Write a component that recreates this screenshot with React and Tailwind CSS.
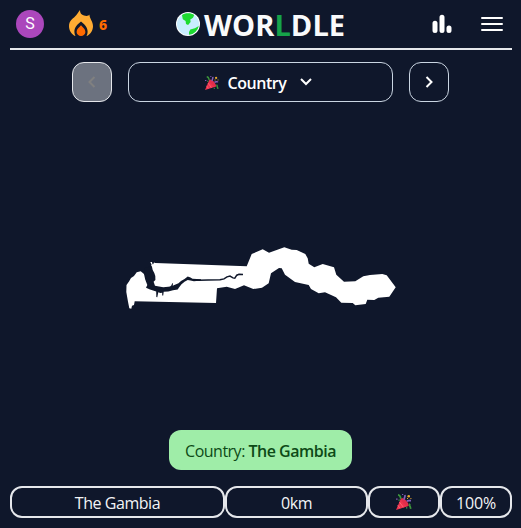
function Globe() {
  return (
    <svg viewBox="0 0 24 24" className="h-6 w-6 shrink-0">
      <circle cx="12" cy="12" r="12" fill="#fff" />
      <circle cx="12" cy="12" r="11" fill="#c9edff" />
      <path d="M6 3.2C8.5.9 15 .7 18.2 3L17 5.8l-2.700 1.600.3 2.500-2.500 3L10 12l-.4-3L6.800 7.300z" fill="#1edb30" />
      <path d="M13 20l1.300-2.600 4.600-1.200L22.800 14A11 11 0 0 1 13 22.800z" fill="#1edb30" />
    </svg>
  );
}

function Party({ className }) {
  return (
    <svg viewBox="0 0 16 16" className={className}>
      <path d="M5 4.2L0 16 12.6 12z" fill="#ee334e" />
      <path d="M5.3 4C8 3.4 13.4 9 12.6 12 9 12 5 8 5.3 4z" fill="#e02e4b" />
      <path d="M3.4 8l4 5.3M1.8 11.2l2 3" stroke="#ff6271" strokeWidth="1" />
      <path d="M2 .8c3 .4 1.8 2.4 3 3.8M14 9.8c-1.5 2 1 2.5.5 5" fill="none" stroke="#3c963c" strokeWidth="1.7" />
      <path d="M8.5 5.6c-1-2 1-2 .4-4.6M10.800 7.200c1.500-1 2-.4 4.200-.5" fill="none" stroke="#8661bd" strokeWidth="1.7" />
      <circle cx="12.7" cy="2.2" r="1.3" fill="#e8a82e" />
      <path d="M11 4h1v1h-1zM14.4 4h1v1h-1z" fill="#e8a82e" />
      <path d="M.2 4.5h1.3v1.3H.2zM6.2 0h1v1h-1z" fill="#9c65cd" />
      <path d="M2.5 5.5h1.2v1.2H2.5zM10 13.3h1.3v1.3H10z" fill="#49a848" />
    </svg>
  );
}

function Header() {
  return (
    <header className="mx-[10px] flex h-[50px] w-[502px] items-start border-b-2 border-gray-200">
      <div className="ml-[6px] mt-[10px] flex h-7 w-7 items-center justify-center rounded-full bg-[#ab47bc] font-['Roboto',sans-serif] text-base leading-none">
        S
      </div>
      <div className="ml-[25px] mt-[10px] flex w-[107px] items-start">
        <svg viewBox="0 0 24 26" className="h-[26px] w-6">
          <path d="M11 0C10.800 3 12.500 5 15 5.500 17.500 6.300 19.500 6 20.500 4.500 20.300 8.500 24 11 24 16.200 24 20.500 21.500 24 18 26H6C2.500 24 0 20.500 0 16.200 0 11 3.500 9 6 6.500 8 4.500 9.500 2 11 0z" fill="#ffac33" />
          <path d="M12 11.500C9 14 5.400 17 5.400 21.500 5.400 23.500 6 25 6.500 26H17.500C18 25 18.600 23.500 18.600 21.500 18.600 17 15 14 12 11.500z" fill="#0f172a" />
          <path d="M12 15.200c-2.200 2.300-4.400 3.900-4.400 6.800a4.400 4 0 0 0 8.800 0c0-2.900-2.200-4.500-4.400-6.800z" fill="#ff6a00" />
        </svg>
        <span className="ml-[6px] mt-[5px] font-['Noto_Sans',sans-serif] text-sm leading-5 font-extrabold text-[#ff6a00]">6</span>
      </div>
      <div className="flex h-12 items-center">
        <Globe />
        <h1 className="ml-1 w-[141px] whitespace-nowrap text-[29px] leading-none font-bold tracking-[0.05px] text-gray-50">
          WOR<span className="text-[#16a34a]">L</span>DLE
        </h1>
      </div>
      <svg viewBox="0 0 20 20" className="ml-[87px] mt-[14px] h-5 w-5" stroke="#fff" strokeWidth="5" strokeLinecap="round">
        <path d="M3 9.200v7.300M10 3.200v13.300M17 14v2.500" />
      </svg>
      <svg viewBox="0 0 22 16" className="ml-[29px] mt-4 h-4 w-[22px]" stroke="#fff" strokeWidth="2" strokeLinecap="round">
        <path d="M1 2h20M1 8h20M1 14h20" />
      </svg>
    </header>
  );
}

function CountryShape() {
  return (
    <svg viewBox="120 240 285 75" className="ml-[120px] mt-[138px] h-[75px] w-[285px]">
      <path
        fill="#fff"
        d="M154 262.500L155.300 263 246.700 266.300 251.700 254l11-4.700 6.300 3.400 15.300-5.400 7.400 2.400 5 .3 8.600 4 2.400 4.300 1 5.400 5.600 3.600 8.400-3.300L334 267.300l2.300 7.400 7.700 7 11.300-.4 8-5L370 275l12.300-1 4.400 1.300 9 12-6.400 9.400-11 1-4 2.300-7-.3-1.600 4.300-10.400 1.300-2.600-2.300-11.400-.3L336 297.300l-11-5-6.300 1L311 289l-2.300-4-13.700-3-10-7.300-3.300-6.400-2.700-.3-8 5.300-2.300 10-6.700 4.400-8.700 1.300-9.300-3.700-9 3.700-8.300-2.300-9.700 1.600-1 14.700-81.300-1.700-.7 3.700-2 .7-.7 3-2-.4L128 301.700 126.300 292 126.500 285 129 281.500 131 278 134 276 136.700 272.300 140.700 271.300 144 274 150 280 152 276 151 267 151.500 264.500 150.300 262 152 262 152.500 264.300 153.200 264.300z"
      />
      <path
        fill="#0f172a"
        d="M144 274L145 268 151.800 266 152.700 270 154.300 273 155.300 276 155.400 280 153.600 281.700 155 285.700 159 286.500 163.300 287.200 168.300 286.800 170 286.500 171.300 285.600 172.300 283 173 283.700 172.700 285.700 175.500 284.600 178.500 283.300 181 281 184.500 279 187.700 276.600 190.500 277.600 192.500 278.700 201 279.200V280.500L194 281.300 190.500 280.600 187.700 279.900 184.500 281.800 181.500 284.300 179 287.500 177.700 289.600 173 290.300 168.300 291.400 163.700 291.700 163.200 295.500 162.200 295.500V292.700L160.300 293 158.300 292.300 157.300 297.300 156.300 297 156.200 291.500 150 289.500 146 287.700 147.300 285 145.200 279.500z"
      />
      <path
        d="M193 280.100l6 .1 9-.1 12-.3 4-.9 3-2 3-.8 3 1.800 1.800.3 2-3 2.200-1 4 .4"
        fill="none" stroke="#0f172a" strokeWidth="1.500"
      />
    </svg>
  );
}

export default function App() {
  return (
    <div className="flex h-[528px] w-[521px] flex-col overflow-hidden bg-slate-900 font-['Open_Sans','Noto_Sans',sans-serif] text-white">
      <Header />
      <nav className="mt-3 flex justify-center gap-4">
        <button className="flex h-10 w-10 items-center justify-center rounded-xl border border-gray-200 bg-[#6c727f] text-[#808080]">
          <svg viewBox="0 0 12 12" className="h-3 w-3" fill="none" stroke="currentColor" strokeWidth="2"><path d="M8.500 1L3.500 6l5 5" /></svg>
        </button>
        <button className="flex h-10 w-[265px] items-center rounded-xl border border-slate-300 pl-[76px]">
          <Party className="mt-0.5 h-[14px] w-[14px]" />
          <span className="ml-2 mt-0.5 w-[60px] whitespace-nowrap text-base leading-6 font-semibold tracking-[-0.45px]">Country</span>
          <svg viewBox="0 0 14 10" className="ml-3 h-[10px] w-[14px]" fill="none" stroke="currentColor" strokeWidth="2"><path d="M2 2l5 5 5-5" /></svg>
        </button>
        <button className="flex h-10 w-10 items-center justify-center rounded-xl border border-slate-300">
          <svg viewBox="0 0 12 12" className="h-3 w-3" fill="none" stroke="currentColor" strokeWidth="2"><path d="M3.500 1l5 5-5 5" /></svg>
        </button>
      </nav>
      <CountryShape />
      <div className="mt-[115px] flex h-10 w-[183px] items-center justify-center self-center whitespace-nowrap rounded-xl bg-[#9feda8] pt-0.5 text-base tracking-[-0.5px] text-[#0d4a17]">
        Country:&nbsp;<b className="font-semibold">The Gambia</b>
      </div>
      <div className="mx-[10px] mt-4 grid h-8 w-[502px] grid-cols-[215px_143px_72px_72px] text-base leading-[26px] tracking-[-0.45px] text-gray-100">
        <div className="rounded-xl border-2 border-gray-200 pt-0.5 text-center">The Gambia</div>
        <div className="rounded-xl border-2 border-gray-200 pt-0.5 text-center">0km</div>
        <div className="flex items-center justify-center rounded-xl border-2 border-gray-200"><Party className="h-4 w-4" /></div>
        <div className="rounded-xl border-2 border-gray-200 pt-0.5 text-center tracking-[-0.2px]">100%</div>
      </div>
    </div>
  );
}
